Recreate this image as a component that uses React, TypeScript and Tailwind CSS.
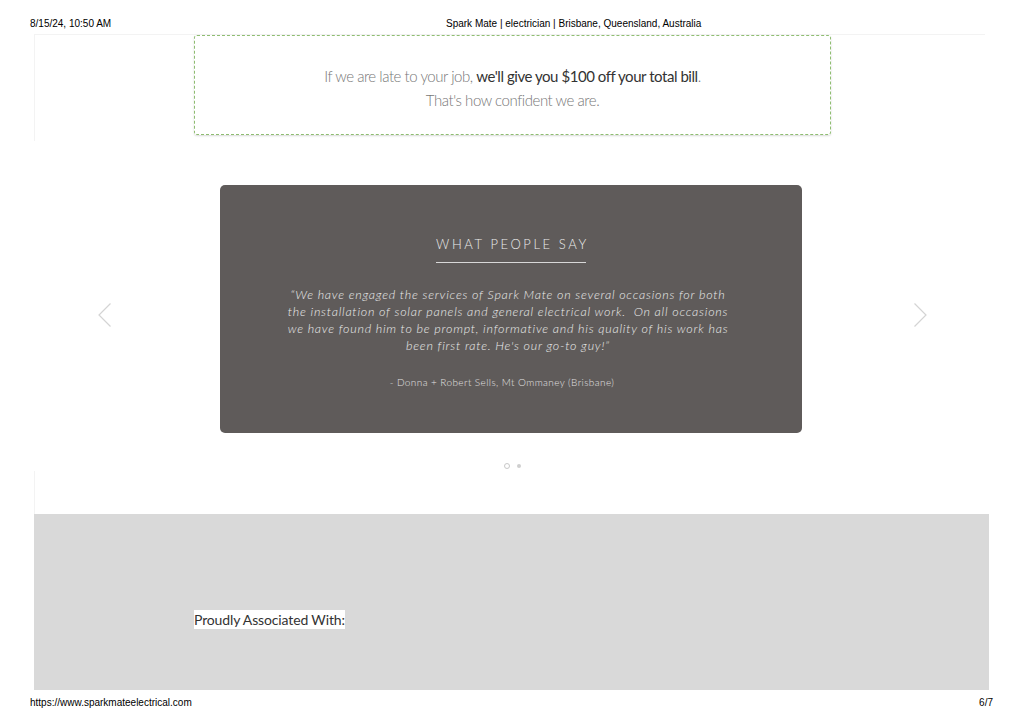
export default function App() {
  return (
    <div className="w-[1024px] h-[723px] bg-white flex flex-col overflow-hidden" style={{ fontFamily: 'Lato, "Noto Sans", sans-serif' }}>
      {/* Print header */}
      <div className="h-[34px] pt-[17px] px-[30px] flex text-[10px] leading-[13px] text-black" style={{ fontFamily: '"Liberation Sans", Arial, sans-serif' }}>
        <span className="w-[416px]">8/15/24, 10:50 AM</span>
        <span>Spark Mate | electrician | Brisbane, Queensland, Australia</span>
      </div>

      {/* Late guarantee */}
      <div className="mx-[34px] w-[951px] h-[107px] border-t border-l border-[#f3f3f3] pl-[159px]">
        <div className="w-[637px] h-[100px] border border-dashed border-[#8fbd72] rounded-[3px] shadow-[0_1px_2px_rgba(0,0,0,0.15)] flex flex-col items-center pt-[28px] text-[15px] leading-[24px] tracking-[-0.03em] font-light text-[#777]">
          <p>
            If we are late to your job, <span className="font-normal text-[#333]">we'll give you $100 off your total bill</span>.
          </p>
          <p>That's how confident we are.</p>
        </div>
      </div>

      {/* Testimonials */}
      <div className="mt-[44px] flex items-center">
        <div className="w-[220px] flex justify-end pr-[109px] pt-[12px]">
          <svg width="13" height="24" viewBox="0 0 13 24" fill="none" stroke="#d4d4d4" strokeWidth="1.2">
            <polyline points="12.5,0.5 1,12 12.5,23.5" />
          </svg>
        </div>
        <div className="w-[582px] h-[248px] bg-[#5f5b5a] rounded-[5px] flex flex-col items-center pt-[51px] text-[#ebebeb]">
          <h2 className="text-[13px] leading-[16px] tracking-[0.2em] font-light pl-[3px]">WHAT PEOPLE SAY</h2>
          <div className="w-[150px] h-px bg-[#d8d8d8] mt-[10px]" />
          <p className="mt-[23px] w-[480px] pr-[6px] text-center italic font-light text-[12.5px] leading-[17px] tracking-[0.06em]">
            “We have engaged the services of Spark Mate on several occasions for both
            <br />
            the installation of solar panels and general electrical work.&nbsp; On all occasions
            <br />
            we have found him to be prompt, informative and his quality of his work has
            <br />
            been first rate. He's our go-to guy!”
          </p>
          <p className="mt-[22px] pr-[18px] text-[10px] leading-[12px] font-light tracking-[0.04em] text-[#e0e0e0]">
            - Donna + Robert Sells, Mt Ommaney (Brisbane)
          </p>
        </div>
        <div className="flex-1 pl-[112px] pt-[12px]">
          <svg width="13" height="24" viewBox="0 0 13 24" fill="none" stroke="#d4d4d4" strokeWidth="1.2">
            <polyline points="0.5,0.5 12,12 0.5,23.5" />
          </svg>
        </div>
      </div>

      {/* Slider dots */}
      <div className="mt-[30px] flex justify-center items-center gap-[7px]">
        <span className="w-[6px] h-[6px] rounded-full border border-[#c8c8c8]" />
        <span className="w-[4px] h-[4px] rounded-full bg-[#cfcfcf]" />
      </div>

      <div className="mx-[34px] h-[43px] border-l border-[#f3f3f3] mt-[2px]" />

      {/* Associations */}
      <div className="mx-[34px] w-[955px] h-[176px] bg-[#d9d9d9] pl-[160px] pt-[93px]">
        <span className="bg-white text-[14px] leading-[20px] tracking-[-0.01em] text-[#333] py-[1px]">Proudly Associated With:</span>
      </div>

      {/* Print footer */}
      <div className="px-[30px] pt-[6px] flex justify-between text-[10px] leading-[13px] text-black pr-[31px]" style={{ fontFamily: '"Liberation Sans", Arial, sans-serif' }}>
        <span>https://www.sparkmateelectrical.com</span>
        <span>6/7</span>
      </div>
    </div>
  )
}
